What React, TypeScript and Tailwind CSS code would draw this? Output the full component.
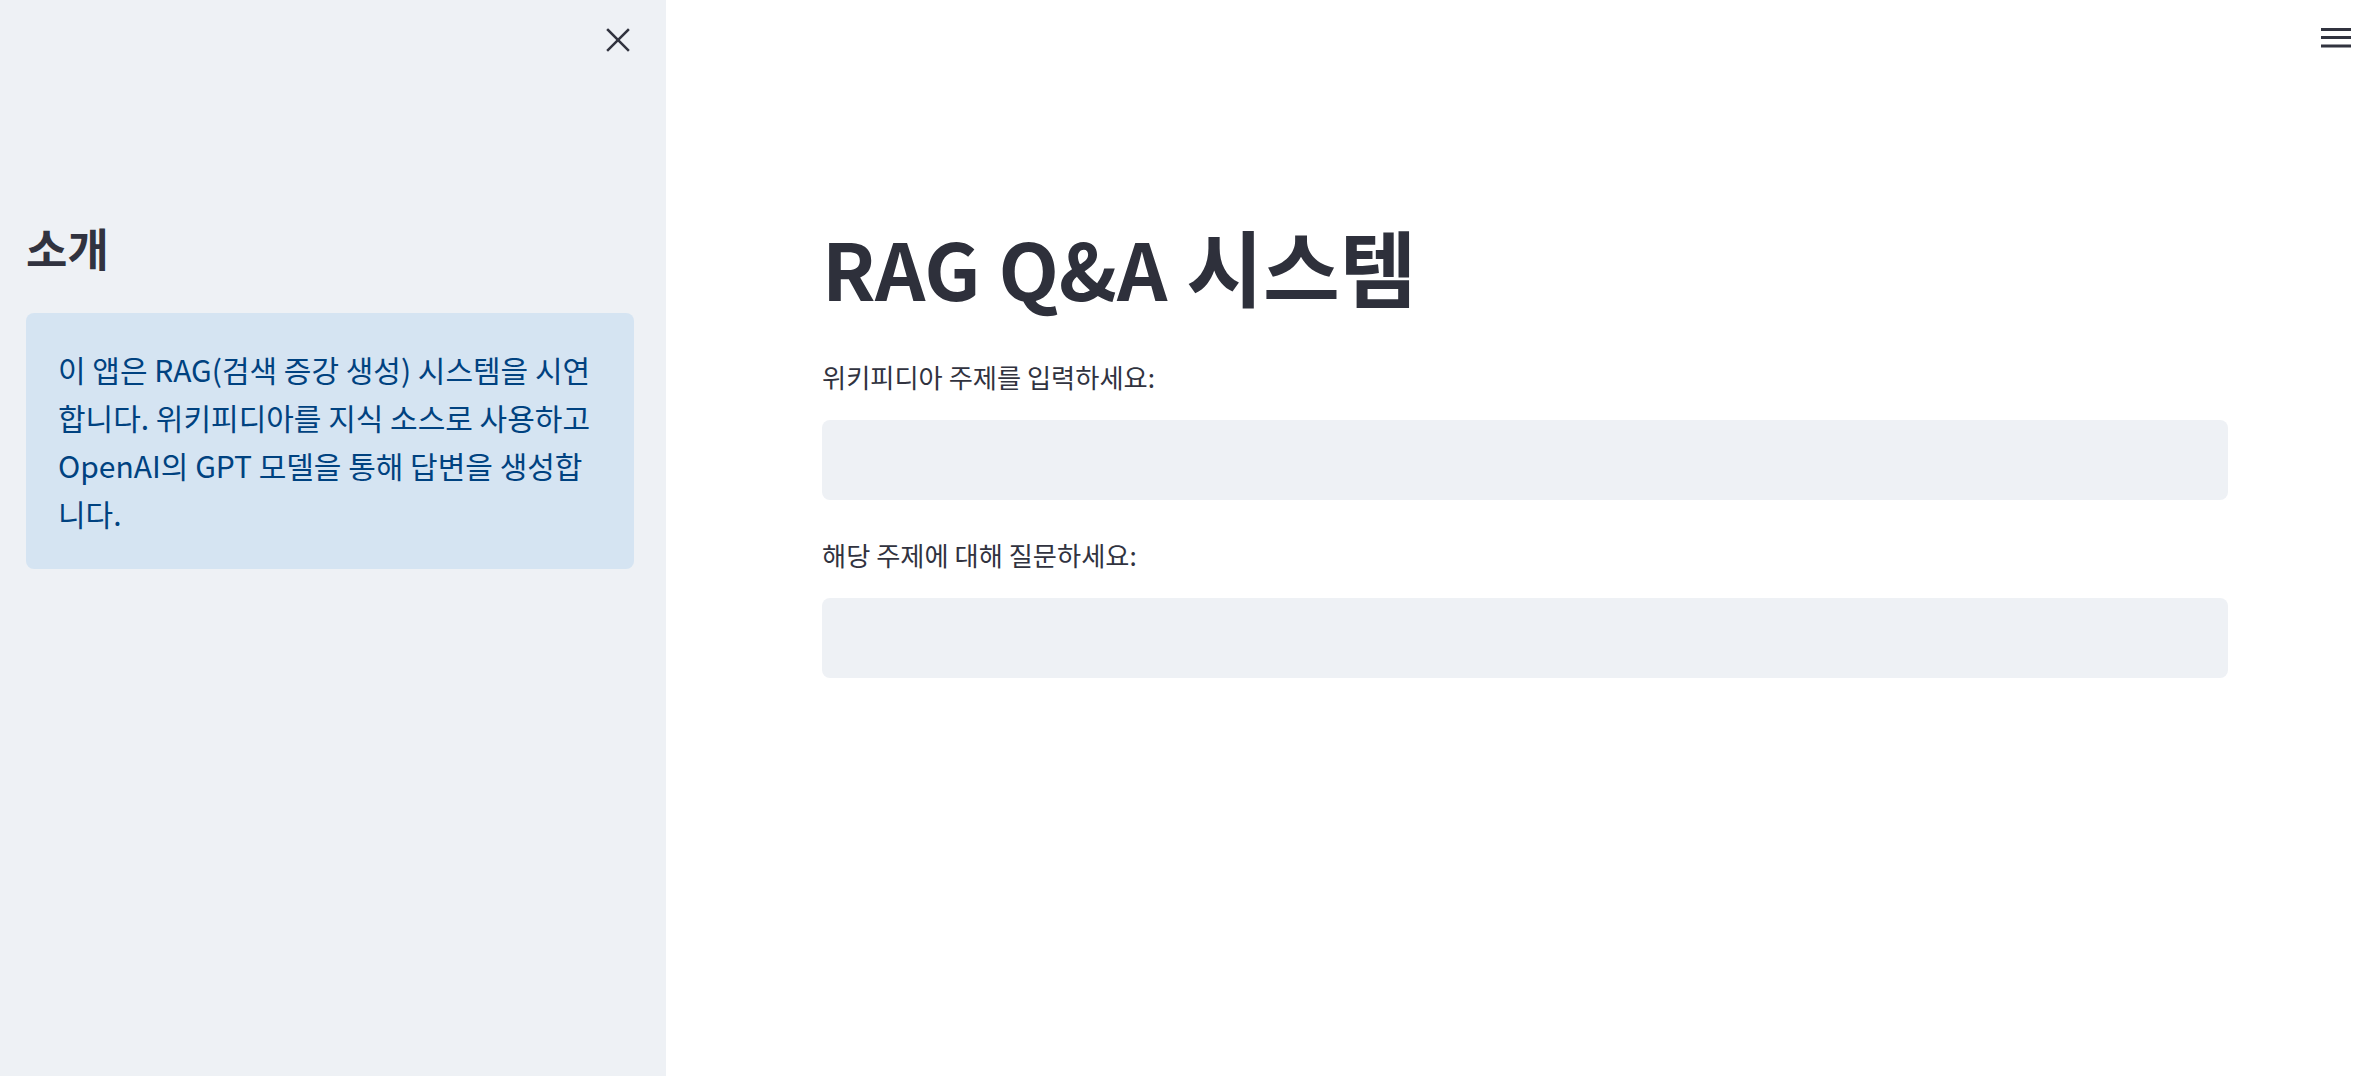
import React from 'react';

// ─── Constants ───────────────────────────────────────────────────────────────

const FONT = { fontFamily: '"Noto Sans CJK KR", "Noto Sans", sans-serif' };

const INFO_LINES = [
  '이 앱은 RAG(검색 증강 생성) 시스템을 시연',
  '합니다. 위키피디아를 지식 소스로 사용하고',
  'OpenAI의 GPT 모델을 통해 답변을 생성합',
  '니다.',
];

// ─── Pieces ──────────────────────────────────────────────────────────────────

function CloseIcon() {
  return (
    <svg className="block" width="24" height="24" viewBox="0 0 24 24" fill="none" stroke="#31333f" strokeWidth="2.5" strokeLinecap="square">
      <line x1="2" y1="2" x2="22" y2="22" />
      <line x1="22" y1="2" x2="2" y2="22" />
    </svg>
  );
}

function MenuIcon() {
  return (
    <svg className="block" width="30" height="22" viewBox="0 0 30 22" fill="#31333f">
      <rect x="0" y="1" width="30" height="3" />
      <rect x="0" y="9" width="30" height="3" />
      <rect x="0" y="17.5" width="30" height="3" />
    </svg>
  );
}

function TextField({ label }: { label: string }) {
  return (
    <div className="flex flex-col">
      <label className="text-[26.25px] leading-[45px] text-[#31333f]">{label}</label>
      <input
        type="text"
        className="mt-[20px] h-[80px] w-full rounded-[8px] bg-[#eef1f5] px-6 text-[28px] outline-none"
      />
    </div>
  );
}

// ─── App ─────────────────────────────────────────────────────────────────────

export default function App() {
  return (
    <div className="flex h-screen w-full overflow-hidden bg-white" style={FONT}>
      {/* Sidebar */}
      <aside className="flex w-[666px] shrink-0 flex-col bg-[#eef1f5] pl-[26px] pr-[32px]">
        <div className="flex justify-end pt-[28px] pr-[4px]">
          <button className="flex h-[24px] w-[24px] items-center justify-center">
            <CloseIcon />
          </button>
        </div>
        <h2 className="mt-[167px] text-[45px] font-bold leading-[58px] text-[#31333f]">소개</h2>
        <div className="mt-[36px] rounded-[8px] bg-[#d5e4f2] px-[32px] py-[32px] text-[30px] leading-[48px] text-[#004280]">
          {INFO_LINES.map((line, i) => (
            <div key={i} className="whitespace-nowrap">{line}</div>
          ))}
        </div>
      </aside>

      {/* Main */}
      <main className="relative flex-1">
        <button className="absolute right-[21px] top-[27px]">
          <MenuIcon />
        </button>
        <div className="ml-[156px] w-[1406px] pt-[212px]">
          <h1 className="h-[106px] text-[83.5px] font-bold leading-[106px] text-[#2e303b]">
            <span className="text-[78.5px] leading-none">RAG Q&amp;A</span> 시스템
          </h1>
          <div className="mt-[37px] flex flex-col gap-[33px]">
            <TextField label="위키피디아 주제를 입력하세요:" />
            <TextField label="해당 주제에 대해 질문하세요:" />
          </div>
        </div>
      </main>
    </div>
  );
}
